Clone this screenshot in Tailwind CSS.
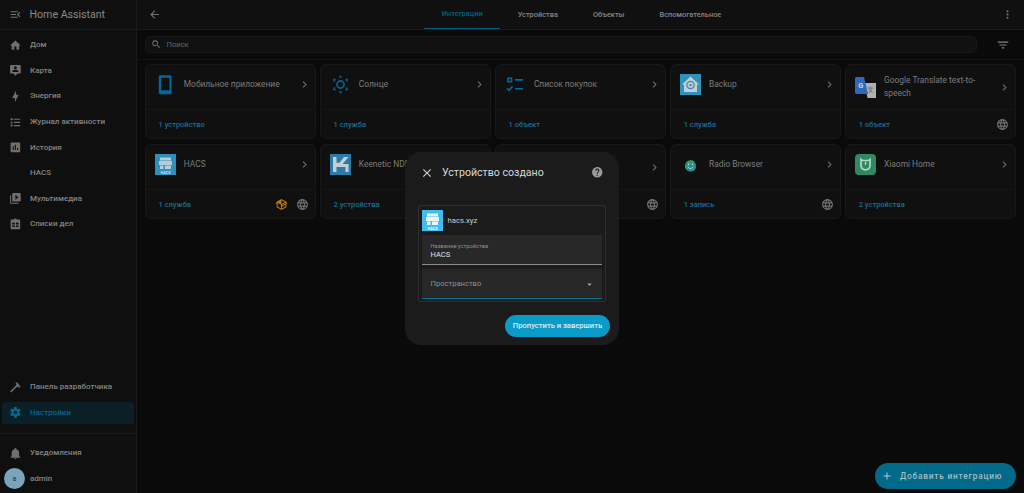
<!doctype html>
<html lang="ru">
<head>
<meta charset="utf-8">
<script src="https://cdn.jsdelivr.net/npm/@tailwindcss/browser@4"></script>
<title>Home Assistant</title>
</head>
<body class="bg-[#0a0a0a]">
<div class="relative flex h-[493px] w-[1024px] overflow-hidden bg-[#0a0a0a] font-['Roboto',sans-serif] text-[#858585]">

  <!-- sidebar -->
  <aside class="flex w-[137px] shrink-0 flex-col border-r border-[#1a1a1a] bg-[#0f0f0f]">
    <div class="flex h-[30px] shrink-0 items-center gap-[7.5px] border-b border-[#1a1a1a] pl-[9px]">
      <svg class="size-[13px] fill-[#767676]" viewBox="0 0 24 24"><path d="M21,15.61L19.59,17L14.58,12L19.59,7L21,8.39L17.44,12L21,15.61M3,6H16V8H3V6M3,13V11H13V13H3M3,18V16H16V18H3Z"/></svg>
      <span class="text-[10.6px] text-[#8a8a8a]">Home Assistant</span>
    </div>
    <nav class="flex flex-1 flex-col pt-[2.4px] text-[8px] font-medium">
      <a class="flex h-[25.6px] items-center gap-[8.2px] pl-[9px]"><svg class="size-[12.8px] shrink-0 fill-[#6f6f6f]" viewBox="0 0 24 24"><path d="M10,20V14H14V20H19V12H22L12,3L2,12H5V20H10Z"/></svg>Дом</a>
      <a class="flex h-[25.6px] items-center gap-[8.2px] pl-[9px]"><svg class="size-[12.8px] shrink-0 fill-[#6f6f6f]" viewBox="0 0 24 24"><path d="M20 2H4C2.9 2 2 2.9 2 4V16C2 17.1 2.9 18 4 18H8L12 22L16 18H20C21.1 18 22 17.1 22 16V4C22 2.9 21.1 2 20 2M12 4.3C13.5 4.3 14.7 5.5 14.7 7S13.5 9.7 12 9.7 9.3 8.5 9.3 7 10.5 4.3 12 4.3M18 15H6V14.1C6 12.1 10 11 12 11S18 12.1 18 14.1V15Z"/></svg>Карта</a>
      <a class="flex h-[25.6px] items-center gap-[8.2px] pl-[9px]"><svg class="size-[12.8px] shrink-0 fill-[#6f6f6f]" viewBox="0 0 24 24"><path d="M11 15H6L13 1V9H18L11 23V15Z"/></svg>Энергия</a>
      <a class="flex h-[25.6px] items-center gap-[8.2px] pl-[9px]"><svg class="size-[12.8px] shrink-0 fill-[#6f6f6f]" viewBox="0 0 24 24"><path d="M5,9.5L7.5,14H2.5L5,9.5M3,4H7V8H3V4M5,20A2,2 0 0,0 7,18A2,2 0 0,0 5,16A2,2 0 0,0 3,18A2,2 0 0,0 5,20M9,5V7H21V5H9M9,19H21V17H9V19M9,13H21V11H9V13Z"/></svg>Журнал активности</a>
      <a class="flex h-[25.6px] items-center gap-[8.2px] pl-[9px]"><svg class="size-[12.8px] shrink-0 fill-[#6f6f6f]" viewBox="0 0 24 24"><path d="M19 3H5C3.9 3 3 3.9 3 5V19C3 20.1 3.9 21 5 21H19C20.1 21 21 20.1 21 19V5C21 3.9 20.1 3 19 3M9 17H7V10H9V17M13 17H11V7H13V17M17 17H15V13H17V17Z"/></svg>История</a>
      <a class="flex h-[25.6px] items-center gap-[8.2px] pl-[9px]"><span class="size-[12.8px] shrink-0"></span>HACS</a>
      <a class="flex h-[25.6px] items-center gap-[8.2px] pl-[9px]"><svg class="size-[12.8px] shrink-0 fill-[#6f6f6f]" viewBox="0 0 24 24"><path d="M4,6H2V20A2,2 0 0,0 4,22H18V20H4V6M20,2H8A2,2 0 0,0 6,4V16A2,2 0 0,0 8,18H20A2,2 0 0,0 22,16V4A2,2 0 0,0 20,2M12,14.5V5.5L18,10L12,14.5Z"/></svg>Мультимедиа</a>
      <a class="flex h-[25.6px] items-center gap-[8.2px] pl-[9px]"><svg class="size-[12.8px] shrink-0 fill-[#6f6f6f]" viewBox="0 0 24 24"><path fill-rule="evenodd" d="M19 3H14.82C14.4 1.84 13.3 1 12 1S9.6 1.84 9.18 3H5C3.9 3 3 3.9 3 5V19C3 20.1 3.9 21 5 21H19C20.1 21 21 20.1 21 19V5C21 3.9 20.1 3 19 3ZM6 9V12H11V9ZM13 9V12H18V9ZM6 14V17H11V14ZM13 14V17H18V14Z"/></svg>Списки дел</a>

      <div class="flex-1"></div>

      <a class="flex h-[25.6px] items-center gap-[8.2px] pl-[9px]"><svg class="size-[12.8px] shrink-0 fill-[#6f6f6f]" viewBox="0 0 24 24"><path d="M2 19.63L13.43 8.2L12.72 7.5L14.14 6.07L12 3.89C13.2 2.7 15.09 2.7 16.27 3.89L19.87 7.5L18.45 8.91H21.29L22 9.62L18.45 13.21L17.74 12.5V9.62L16.27 11.04L15.56 10.33L4.13 21.76L2 19.63Z"/></svg>Панель разработчика</a>
      <a class="relative flex h-[25.6px] items-center gap-[8.2px] pl-[9px] text-[#036a8e]"><span class="absolute left-[2px] top-[1.8px] h-[22px] w-[132px] rounded-[3px] bg-[#0b1f27]"></span><svg class="relative size-[12.8px] shrink-0 fill-[#036a8e]" viewBox="0 0 24 24"><path d="M12,15.5A3.5,3.5 0 0,1 8.5,12A3.5,3.5 0 0,1 12,8.5A3.5,3.5 0 0,1 15.5,12A3.5,3.5 0 0,1 12,15.5M19.43,12.97C19.47,12.65 19.5,12.33 19.5,12C19.5,11.67 19.47,11.34 19.43,11L21.54,9.37C21.73,9.22 21.78,8.95 21.66,8.73L19.66,5.27C19.54,5.05 19.27,4.96 19.05,5.05L16.56,6.05C16.04,5.66 15.5,5.32 14.87,5.07L14.5,2.42C14.46,2.18 14.25,2 14,2H10C9.75,2 9.54,2.18 9.5,2.42L9.13,5.07C8.5,5.32 7.96,5.66 7.44,6.05L4.95,5.05C4.73,4.96 4.46,5.05 4.34,5.27L2.34,8.73C2.21,8.95 2.27,9.22 2.46,9.37L4.57,11C4.53,11.34 4.5,11.67 4.5,12C4.5,12.33 4.53,12.65 4.57,12.97L2.46,14.63C2.27,14.78 2.21,15.05 2.34,15.27L4.34,18.73C4.46,18.95 4.73,19.03 4.95,18.95L7.44,17.94C7.96,18.34 8.5,18.68 9.13,18.93L9.5,21.58C9.54,21.82 9.75,22 10,22H14C14.25,22 14.46,21.82 14.5,21.58L14.87,18.93C15.5,18.67 16.04,18.34 16.56,17.94L19.05,18.95C19.27,19.03 19.54,18.95 19.66,18.73L21.66,15.27C21.78,15.05 21.73,14.78 21.54,14.63L19.43,12.97Z"/></svg><span class="relative">Настройки</span></a>
      <div class="my-[7px] border-t border-[#1a1a1a]"></div>
      <a class="flex h-[25.6px] items-center gap-[8.2px] pl-[9px]"><svg class="size-[12.8px] shrink-0 fill-[#6f6f6f]" viewBox="0 0 24 24"><path d="M21,19V20H3V19L5,17V11C5,7.9 7.03,5.17 10,4.29C10,4.19 10,4.1 10,4A2,2 0 0,1 12,2A2,2 0 0,1 14,4C14,4.1 14,4.19 14,4.29C16.97,5.17 19,7.9 19,11V17L21,19M14,21A2,2 0 0,1 12,23A2,2 0 0,1 10,21"/></svg>Уведомления</a>
      <a class="mb-[1.3px] flex h-[25.6px] items-center gap-[5px] pl-[4px]"><span class="flex size-[21px] shrink-0 items-center justify-center rounded-full bg-[#7ba3bc] text-[7px] text-[#33454f]">a</span>admin</a>
    </nav>
  </aside>

  <!-- main -->
  <main class="flex min-w-0 flex-1 flex-col">
    <header class="flex h-[30px] shrink-0 items-center border-b border-[#1a1a1a] bg-[#101010] px-[11px]">
      <div class="flex flex-1">
        <svg class="size-[13px] fill-[#727272]" viewBox="0 0 24 24"><path d="M20,11V13H8L13.5,18.5L12.08,19.92L4.16,12L12.08,4.08L13.5,5.5L8,11H20Z"/></svg>
      </div>
      <div class="ml-[2px] flex h-full text-[7.4px] font-medium">
        <a class="flex items-center border-b-[1.5px] border-[#02617f] px-[17.5px] text-[#02617f]">Интеграции</a>
        <a class="flex items-center px-[17.5px]">Устройства</a>
        <a class="flex items-center px-[17.5px]">Объекты</a>
        <a class="flex items-center px-[17.5px]">Вспомогательное</a>
      </div>
      <div class="flex flex-1 justify-end">
        <svg class="mr-[-1px] size-[13px] fill-[#727272]" viewBox="0 0 24 24"><path d="M12,16A2,2 0 0,1 14,18A2,2 0 0,1 12,20A2,2 0 0,1 10,18A2,2 0 0,1 12,16M12,10A2,2 0 0,1 14,12A2,2 0 0,1 12,14A2,2 0 0,1 10,12A2,2 0 0,1 12,10M12,4A2,2 0 0,1 14,6A2,2 0 0,1 12,8A2,2 0 0,1 10,6A2,2 0 0,1 12,4Z"/></svg>
      </div>
    </header>

    <div class="flex h-[30px] shrink-0 items-center gap-[19px] border-b border-[#121212] pl-[8px] pr-[14px]">
      <div class="flex h-[17px] flex-1 items-center gap-[5px] rounded-[5px] border border-[#181818] bg-[#111111] pl-[5px] text-[7.6px] text-[#666666]">
        <svg class="size-[10.5px] fill-[#777777]" viewBox="0 0 24 24"><path d="M9.5,3A6.5,6.5 0 0,1 16,9.5C16,11.11 15.41,12.59 14.44,13.73L14.71,14H15.5L20.5,19L19,20.5L14,15.5V14.71L13.73,14.44C12.59,15.41 11.11,16 9.5,16A6.5,6.5 0 0,1 3,9.5A6.5,6.5 0 0,1 9.5,3M9.5,5C7,5 5,7 5,9.5C5,12 7,14 9.5,14C12,14 14,12 14,9.5C14,7 12,5 9.5,5Z"/></svg>
        Поиск
      </div>
      <svg class="size-[14px] fill-[#848484]" viewBox="0 0 24 24"><path d="M6,13H18V11H6M3,6V8H21V6M10,18H14V16H10V18Z"/></svg>
    </div>

    <section class="grid grid-cols-5 gap-x-[4.3px] gap-y-[5px] pl-[8px] pr-[8px] pt-[4.3px]">

      <!-- card 1 -->
      <article class="flex h-[75px] flex-col rounded-[6px] border border-[#181818] bg-[#101010]">
        <div class="flex h-[45px] shrink-0 items-center gap-[8.3px] border-b border-[#161616] pb-[5px] pl-[8.5px] pr-[3.7px]">
          <svg class="size-[21px] shrink-0" viewBox="0 0 21 21"><path fill="#02679a" fill-rule="evenodd" d="M5.3 1.3H15C15.9 1.3 16.5 1.9 16.5 2.8V18.8C16.5 19.7 15.9 20.3 15 20.3H5.3C4.4 20.3 3.8 19.7 3.8 18.8V2.8C3.8 1.9 4.4 1.3 5.3 1.3ZM6.2 3.7V16.3H14.5V3.7Z"/></svg>
          <span class="flex-1 text-[8.4px] text-[#7c7c7c]">Мобильное приложение</span>
          <svg class="size-[13px] fill-[#6d6d6d]" viewBox="0 0 24 24"><path d="M8.59,16.58L13.17,12L8.59,7.41L10,6L16,12L10,18L8.59,16.58Z"/></svg>
        </div>
        <div class="flex flex-1 items-center px-[12.5px] text-[7.5px] font-medium text-[#1b6d8f]">1 устройство</div>
      </article>

      <!-- card 2 -->
      <article class="flex h-[75px] flex-col rounded-[6px] border border-[#181818] bg-[#101010]">
        <div class="flex h-[45px] shrink-0 items-center gap-[8.3px] border-b border-[#161616] pb-[5px] pl-[8.5px] pr-[3.7px]">
          <svg class="size-[21px] shrink-0" viewBox="0 0 21 21"><circle cx="10.5" cy="10.5" r="3.6" fill="none" stroke="#02679a" stroke-width="1.6"/><path fill="#02679a" d="M10.5 1.2L12.4 3.6H8.6ZM10.5 19.8L12.4 17.4H8.6ZM3.2 4.8H5.8V7.4H3.2ZM15.2 4.8H17.8V7.4H15.2ZM3.2 13.6H5.8V16.2H3.2ZM15.2 13.6H17.8V16.2H15.2Z"/><path fill="#101010" d="M4.8 5.8h1v1.6h-1zM15.2 5.8h1v1.6h-1zM4.8 13.6h1v1.6h-1zM15.2 13.6h1v1.6h-1z"/></svg>
          <span class="flex-1 text-[8.4px] text-[#7c7c7c]">Солнце</span>
          <svg class="size-[13px] fill-[#6d6d6d]" viewBox="0 0 24 24"><path d="M8.59,16.58L13.17,12L8.59,7.41L10,6L16,12L10,18L8.59,16.58Z"/></svg>
        </div>
        <div class="flex flex-1 items-center px-[12.5px] text-[7.5px] font-medium text-[#1b6d8f]">1 служба</div>
      </article>

      <!-- card 3 -->
      <article class="flex h-[75px] flex-col rounded-[6px] border border-[#181818] bg-[#101010]">
        <div class="flex h-[45px] shrink-0 items-center gap-[8.3px] border-b border-[#161616] pb-[5px] pl-[8.5px] pr-[3.7px]">
          <svg class="size-[21px] shrink-0" viewBox="0 0 21 21"><path fill="none" stroke="#02679a" stroke-width="1.6" d="M2.9 4.2h3.6v3.6H2.9ZM10 5.9H18M10 14.8H18M2 14.4l2 2 3.6-4"/></svg>
          <span class="flex-1 text-[8.4px] text-[#7c7c7c]">Список покупок</span>
          <svg class="size-[13px] fill-[#6d6d6d]" viewBox="0 0 24 24"><path d="M8.59,16.58L13.17,12L8.59,7.41L10,6L16,12L10,18L8.59,16.58Z"/></svg>
        </div>
        <div class="flex flex-1 items-center px-[12.5px] text-[7.5px] font-medium text-[#1b6d8f]">1 объект</div>
      </article>

      <!-- card 4 -->
      <article class="flex h-[75px] flex-col rounded-[6px] border border-[#181818] bg-[#101010]">
        <div class="flex h-[45px] shrink-0 items-center gap-[8.3px] border-b border-[#161616] pb-[5px] pl-[8.5px] pr-[3.7px]">
          <svg class="size-[21px] shrink-0" viewBox="0 0 21 21"><rect width="21" height="21" fill="#3091bd"/><path fill="#c4cdd1" d="M10.5 2.4L19 10.4H17V18H4V10.4H2Z"/><circle cx="10.5" cy="11" r="3.6" fill="none" stroke="#3091bd" stroke-width="1.3"/><circle cx="10.5" cy="11" r="1.2" fill="#3091bd"/></svg>
          <span class="flex-1 text-[8.4px] text-[#7c7c7c]">Backup</span>
          <svg class="size-[13px] fill-[#6d6d6d]" viewBox="0 0 24 24"><path d="M8.59,16.58L13.17,12L8.59,7.41L10,6L16,12L10,18L8.59,16.58Z"/></svg>
        </div>
        <div class="flex flex-1 items-center px-[12.5px] text-[7.5px] font-medium text-[#1b6d8f]">1 служба</div>
      </article>

      <!-- card 5 -->
      <article class="flex h-[75px] flex-col rounded-[6px] border border-[#181818] bg-[#101010]">
        <div class="flex h-[45px] shrink-0 items-center gap-[8.3px] border-b border-[#161616] pl-[8.5px] pr-[3.7px]">
          <div class="relative h-[21px] w-[21px] shrink-0">
            <svg class="absolute inset-0 size-[21px]" viewBox="0 0 21 21"><path fill="#b0b0b0" d="M9.5 6H21V21H12.5Z"/><path fill="#3268b8" d="M0 1.5C0 .7 .7 0 1.5 0H9L13 17H1.5C.7 17 0 16.3 0 15.5Z"/></svg>
            <span class="absolute left-[3.5px] top-[4px] text-[7.5px] font-bold leading-[9px] text-[#c7d3e8]">G</span>
            <span class="absolute left-[12.5px] top-[9px] text-[6.5px] leading-[8px] text-[#5a5a5a]">文</span>
          </div>
          <span class="flex-1 text-[8.4px] leading-[13.4px] text-[#7c7c7c]">Google Translate text-to-speech</span>
          <svg class="size-[13px] shrink-0 fill-[#6d6d6d]" viewBox="0 0 24 24"><path d="M8.59,16.58L13.17,12L8.59,7.41L10,6L16,12L10,18L8.59,16.58Z"/></svg>
        </div>
        <div class="flex flex-1 items-center justify-between pl-[12.5px] pr-[5.5px] text-[7.5px] font-medium text-[#1b6d8f]">1 объект
          <svg class="size-[13px] fill-[#727272]" viewBox="0 0 24 24"><path d="M16.36,14C16.44,13.34 16.5,12.68 16.5,12C16.5,11.32 16.44,10.66 16.36,10H19.74C19.9,10.64 20,11.31 20,12C20,12.69 19.9,13.36 19.74,14M14.59,19.56C15.19,18.45 15.65,17.25 15.97,16H18.92C17.96,17.65 16.43,18.93 14.59,19.56M14.34,14H9.66C9.56,13.34 9.5,12.68 9.5,12C9.5,11.32 9.56,10.65 9.66,10H14.34C14.43,10.65 14.5,11.32 14.5,12C14.5,12.68 14.43,13.34 14.34,14M12,19.96C11.17,18.76 10.5,17.43 10.09,16H13.91C13.5,17.43 12.83,18.76 12,19.96M8,8H5.08C6.03,6.34 7.57,5.06 9.4,4.44C8.8,5.55 8.35,6.75 8,8M5.08,16H8C8.35,17.25 8.8,18.45 9.4,19.56C7.57,18.93 6.03,17.65 5.08,16M4.26,14C4.1,13.36 4,12.69 4,12C4,11.31 4.1,10.64 4.26,10H7.64C7.56,10.66 7.5,11.32 7.5,12C7.5,12.68 7.56,13.34 7.64,14M12,4.03C12.83,5.23 13.5,6.57 13.91,8H10.09C10.5,6.57 11.17,5.23 12,4.03M18.92,8H15.97C15.65,6.75 15.19,5.55 14.59,4.44C16.43,5.07 17.96,6.34 18.92,8M12,2C6.47,2 2,6.5 2,12A10,10 0 0,0 12,22A10,10 0 0,0 22,12A10,10 0 0,0 12,2Z"/></svg>
        </div>
      </article>

      <!-- card 6 HACS -->
      <article class="flex h-[75px] flex-col rounded-[6px] border border-[#181818] bg-[#101010]">
        <div class="flex h-[45px] shrink-0 items-center gap-[8.3px] border-b border-[#161616] pb-[5px] pl-[8.5px] pr-[3.7px]">
          <svg class="size-[21px] shrink-0" viewBox="0 0 21 21"><rect width="21" height="21" fill="#2f8fbb"/><path fill="#b8cad3" d="M5 3.5H16V6.5H5ZM4 7H17V11H4ZM5 11.5H8.5V15H5ZM10 11.5H16V15H10Z"/><text x="10.5" y="19.5" text-anchor="middle" font-size="3.8" font-weight="700" fill="#d2dde2" font-family="Roboto">HACS</text></svg>
          <span class="flex-1 text-[8.4px] text-[#7c7c7c]">HACS</span>
          <svg class="size-[13px] fill-[#6d6d6d]" viewBox="0 0 24 24"><path d="M8.59,16.58L13.17,12L8.59,7.41L10,6L16,12L10,18L8.59,16.58Z"/></svg>
        </div>
        <div class="flex flex-1 items-center gap-[8px] pl-[12.5px] pr-[5.5px] text-[7.5px] font-medium text-[#1b6d8f]"><span class="flex-1">1 служба</span>
          <svg class="size-[13px] fill-[#b8770a]" viewBox="0 0 24 24"><path d="M2,10.96C1.5,10.68 1.35,10.07 1.63,9.59L3.13,7C3.24,6.8 3.41,6.66 3.6,6.58L11.43,2.18C11.59,2.06 11.79,2 12,2C12.21,2 12.41,2.06 12.57,2.18L20.47,6.62C20.66,6.72 20.82,6.88 20.91,7.08L22.36,9.6C22.64,10.08 22.47,10.69 22,10.96L21,11.54V16.5C21,16.88 20.79,17.21 20.47,17.38L12.57,21.82C12.41,21.94 12.21,22 12,22C11.79,22 11.59,21.94 11.43,21.82L3.53,17.38C3.21,17.21 3,16.88 3,16.5V10.96C2.7,11.13 2.32,11.14 2,10.96M12,4.15V4.15L12,10.85V10.85L17.96,7.5L12,4.15M5,15.91L11,19.29V12.58L5,9.21V15.91M19,15.91V12.69L14,15.59C13.67,15.77 13.3,15.76 13,15.6V19.29L19,15.91M13.85,13.36L20.13,9.73L19.55,8.72L13.27,12.35L13.85,13.36Z"/></svg>
          <svg class="size-[13px] fill-[#727272]" viewBox="0 0 24 24"><path d="M16.36,14C16.44,13.34 16.5,12.68 16.5,12C16.5,11.32 16.44,10.66 16.36,10H19.74C19.9,10.64 20,11.31 20,12C20,12.69 19.9,13.36 19.74,14M14.59,19.56C15.19,18.45 15.65,17.25 15.97,16H18.92C17.96,17.65 16.43,18.93 14.59,19.56M14.34,14H9.66C9.56,13.34 9.5,12.68 9.5,12C9.5,11.32 9.56,10.65 9.66,10H14.34C14.43,10.65 14.5,11.32 14.5,12C14.5,12.68 14.43,13.34 14.34,14M12,19.96C11.17,18.76 10.5,17.43 10.09,16H13.91C13.5,17.43 12.83,18.76 12,19.96M8,8H5.08C6.03,6.34 7.57,5.06 9.4,4.44C8.8,5.55 8.35,6.75 8,8M5.08,16H8C8.35,17.25 8.8,18.45 9.4,19.56C7.57,18.93 6.03,17.65 5.08,16M4.26,14C4.1,13.36 4,12.69 4,12C4,11.31 4.1,10.64 4.26,10H7.64C7.56,10.66 7.5,11.32 7.5,12C7.5,12.68 7.56,13.34 7.64,14M12,4.03C12.83,5.23 13.5,6.57 13.91,8H10.09C10.5,6.57 11.17,5.23 12,4.03M18.92,8H15.97C15.65,6.75 15.19,5.55 14.59,4.44C16.43,5.07 17.96,6.34 18.92,8M12,2C6.47,2 2,6.5 2,12A10,10 0 0,0 12,22A10,10 0 0,0 22,12A10,10 0 0,0 12,2Z"/></svg>
        </div>
      </article>

      <!-- card 7 Keenetic -->
      <article class="flex h-[75px] flex-col rounded-[6px] border border-[#181818] bg-[#101010]">
        <div class="flex h-[45px] shrink-0 items-center gap-[8.3px] border-b border-[#161616] pb-[5px] pl-[8.5px] pr-[3.7px]">
          <svg class="size-[21px] shrink-0" viewBox="0 0 21 21"><rect width="21" height="21" fill="#2b7ba6"/><path fill="#c4cfd4" d="M3 3H6.5V8.8H9.5L14 3H18.5L12.6 10H18.5V18H15.5V13H6.5V18H3Z"/></svg>
          <span class="flex-1 whitespace-nowrap text-[8.4px] text-[#7c7c7c]">Keenetic NDMS2 Router</span>
        </div>
        <div class="flex flex-1 items-center px-[12.5px] text-[7.5px] font-medium text-[#1b6d8f]">2 устройства</div>
      </article>

      <!-- card 8 (behind dialog) -->
      <article class="flex h-[75px] flex-col rounded-[6px] border border-[#181818] bg-[#101010]">
        <div class="flex h-[45px] shrink-0 items-center justify-end border-b border-[#161616] pl-[8.5px] pr-[3.7px]">
          <svg class="size-[13px] fill-[#6d6d6d]" viewBox="0 0 24 24"><path d="M8.59,16.58L13.17,12L8.59,7.41L10,6L16,12L10,18L8.59,16.58Z"/></svg>
        </div>
        <div class="flex flex-1 items-center justify-end pr-[5.5px]">
          <svg class="size-[13px] fill-[#727272]" viewBox="0 0 24 24"><path d="M16.36,14C16.44,13.34 16.5,12.68 16.5,12C16.5,11.32 16.44,10.66 16.36,10H19.74C19.9,10.64 20,11.31 20,12C20,12.69 19.9,13.36 19.74,14M14.59,19.56C15.19,18.45 15.65,17.25 15.97,16H18.92C17.96,17.65 16.43,18.93 14.59,19.56M14.34,14H9.66C9.56,13.34 9.5,12.68 9.5,12C9.5,11.32 9.56,10.65 9.66,10H14.34C14.43,10.65 14.5,11.32 14.5,12C14.5,12.68 14.43,13.34 14.34,14M12,19.96C11.17,18.76 10.5,17.43 10.09,16H13.91C13.5,17.43 12.83,18.76 12,19.96M8,8H5.08C6.03,6.34 7.57,5.06 9.4,4.44C8.8,5.55 8.35,6.75 8,8M5.08,16H8C8.35,17.25 8.8,18.45 9.4,19.56C7.57,18.93 6.03,17.65 5.08,16M4.26,14C4.1,13.36 4,12.69 4,12C4,11.31 4.1,10.64 4.26,10H7.64C7.56,10.66 7.5,11.32 7.5,12C7.5,12.68 7.56,13.34 7.64,14M12,4.03C12.83,5.23 13.5,6.57 13.91,8H10.09C10.5,6.57 11.17,5.23 12,4.03M18.92,8H15.97C15.65,6.75 15.19,5.55 14.59,4.44C16.43,5.07 17.96,6.34 18.92,8M12,2C6.47,2 2,6.5 2,12A10,10 0 0,0 12,22A10,10 0 0,0 22,12A10,10 0 0,0 12,2Z"/></svg>
        </div>
      </article>

      <!-- card 9 Radio Browser -->
      <article class="flex h-[75px] flex-col rounded-[6px] border border-[#181818] bg-[#101010]">
        <div class="flex h-[45px] shrink-0 items-center gap-[8.3px] border-b border-[#161616] pb-[5px] pl-[8.5px] pr-[3.7px]">
          <svg class="size-[21px] shrink-0" viewBox="0 0 21 21"><circle cx="10.5" cy="12" r="5.6" fill="#1f8a9e"/><path fill="#3b9c55" d="M6 8.5C8 6 12 5.5 14.5 7.5L12 9.5L8.5 9ZM5.2 12C6.5 11.5 7.5 13 7.5 15L6.5 15.5C5.6 14.5 5.2 13.3 5.2 12ZM12 15.5L15.8 12.5C15.8 14.6 14.5 16.6 12.4 17.3Z"/><path fill="none" stroke="#c9d6d4" stroke-width="1" d="M7.8 12.6c1.4 2.6 4 2.6 5.4 0"/><circle cx="8.5" cy="10.4" r=".8" fill="#c9d6d4"/><circle cx="12.5" cy="10.4" r=".8" fill="#c9d6d4"/></svg>
          <span class="flex-1 text-[8.4px] text-[#7c7c7c]">Radio Browser</span>
          <svg class="size-[13px] fill-[#6d6d6d]" viewBox="0 0 24 24"><path d="M8.59,16.58L13.17,12L8.59,7.41L10,6L16,12L10,18L8.59,16.58Z"/></svg>
        </div>
        <div class="flex flex-1 items-center justify-between pl-[12.5px] pr-[5.5px] text-[7.5px] font-medium text-[#1b6d8f]">1 запись
          <svg class="size-[13px] fill-[#727272]" viewBox="0 0 24 24"><path d="M16.36,14C16.44,13.34 16.5,12.68 16.5,12C16.5,11.32 16.44,10.66 16.36,10H19.74C19.9,10.64 20,11.31 20,12C20,12.69 19.9,13.36 19.74,14M14.59,19.56C15.19,18.45 15.65,17.25 15.97,16H18.92C17.96,17.65 16.43,18.93 14.59,19.56M14.34,14H9.66C9.56,13.34 9.5,12.68 9.5,12C9.5,11.32 9.56,10.65 9.66,10H14.34C14.43,10.65 14.5,11.32 14.5,12C14.5,12.68 14.43,13.34 14.34,14M12,19.96C11.17,18.76 10.5,17.43 10.09,16H13.91C13.5,17.43 12.83,18.76 12,19.96M8,8H5.08C6.03,6.34 7.57,5.06 9.4,4.44C8.8,5.55 8.35,6.75 8,8M5.08,16H8C8.35,17.25 8.8,18.45 9.4,19.56C7.57,18.93 6.03,17.65 5.08,16M4.26,14C4.1,13.36 4,12.69 4,12C4,11.31 4.1,10.64 4.26,10H7.64C7.56,10.66 7.5,11.32 7.5,12C7.5,12.68 7.56,13.34 7.64,14M12,4.03C12.83,5.23 13.5,6.57 13.91,8H10.09C10.5,6.57 11.17,5.23 12,4.03M18.92,8H15.97C15.65,6.75 15.19,5.55 14.59,4.44C16.43,5.07 17.96,6.34 18.92,8M12,2C6.47,2 2,6.5 2,12A10,10 0 0,0 12,22A10,10 0 0,0 22,12A10,10 0 0,0 12,2Z"/></svg>
        </div>
      </article>

      <!-- card 10 Xiaomi -->
      <article class="flex h-[75px] flex-col rounded-[6px] border border-[#181818] bg-[#101010]">
        <div class="flex h-[45px] shrink-0 items-center gap-[8.3px] border-b border-[#161616] pb-[5px] pl-[8.5px] pr-[3.7px]">
          <svg class="size-[21px] shrink-0" viewBox="0 0 21 21"><rect width="21" height="21" rx="4" fill="#2f8a63"/><path fill="none" stroke="#b9d3c6" stroke-width="1.7" d="M6 5.5C7.5 7 13.5 7 15 5.5V11.5C15 14 13 15.8 10.5 15.8S6 14 6 11.5Z"/><path stroke="#b9d3c6" stroke-width="1.3" d="M10.5 8V11"/></svg>
          <span class="flex-1 text-[8.4px] text-[#7c7c7c]">Xiaomi Home</span>
          <svg class="size-[13px] fill-[#6d6d6d]" viewBox="0 0 24 24"><path d="M8.59,16.58L13.17,12L8.59,7.41L10,6L16,12L10,18L8.59,16.58Z"/></svg>
        </div>
        <div class="flex flex-1 items-center px-[12.5px] text-[7.5px] font-medium text-[#1b6d8f]">2 устройства</div>
      </article>
    </section>
  </main>

  <!-- FAB -->
  <button class="absolute left-[875px] top-[463px] flex h-[26px] w-[141px] items-center gap-[7px] whitespace-nowrap rounded-full bg-[#016a89] pl-[6px] text-[8.3px] font-medium tracking-[0.8px] text-[#a3bcc6]">
    <svg class="size-[12px] fill-[#b2c8d0]" viewBox="0 0 24 24"><path d="M19,13H13V19H11V13H5V11H11V5H13V11H19V13Z"/></svg>
    Добавить интеграцию
  </button>

  <!-- dialog -->
  <div class="absolute left-[405px] top-[152px] flex h-[193px] w-[214px] flex-col rounded-[16px] bg-[#1b1b1b] px-[13px]">
    <div class="flex h-[41px] shrink-0 items-center pl-[1.5px] pr-[2.75px]">
      <svg class="size-[14px] shrink-0 fill-[#d0d0d0]" viewBox="0 0 24 24"><path d="M19,6.41L17.59,5L12,10.59L6.41,5L5,6.41L10.59,12L5,17.59L6.41,19L12,13.41L17.59,19L19,17.59L13.41,12L19,6.41Z"/></svg>
      <h2 class="ml-[8.5px] flex-1 text-[10.6px] font-normal text-[#d8d8d8]">Устройство создано</h2>
      <svg class="size-[12.5px] shrink-0 fill-[#9a9a9a]" viewBox="0 0 24 24"><path d="M15.07,11.25L14.17,12.17C13.45,12.89 13,13.5 13,15H11V14.5C11,13.39 11.45,12.39 12.17,11.67L13.41,10.41C13.78,10.05 14,9.55 14,9C14,7.89 13.1,7 12,7A2,2 0 0,0 10,9H8A4,4 0 0,1 12,5A4,4 0 0,1 16,9C16,9.88 15.64,10.67 15.07,11.25M13,19H11V17H13M12,2A10,10 0 0,0 2,12A10,10 0 0,0 12,22A10,10 0 0,0 22,12C22,6.47 17.5,2 12,2Z"/></svg>
    </div>
    <div class="mt-[12px] flex h-[97px] w-[188px] flex-col rounded-[2px] border border-[#2e2e2e] px-[3px] pt-[3px]">
      <div class="flex h-[22px] shrink-0 items-center gap-[4.5px] text-[7.7px] text-[#cccccc]">
        <svg class="size-[21px] shrink-0" viewBox="0 0 21 21"><rect width="21" height="21" fill="#40bcf0"/><path fill="#ecf6fb" d="M5 3.5H16V6.5H5ZM4 7H17V11H4ZM5 11.5H8.5V15H5ZM10 11.5H16V15H10Z"/><text x="10.5" y="19.5" text-anchor="middle" font-size="3.8" font-weight="700" fill="#ffffff" font-family="Roboto">HACS</text></svg>
        <span class="pt-[1px]">hacs.xyz</span>
      </div>
      <div class="mt-[4px] flex h-[30px] shrink-0 flex-col justify-center border-b border-[#8c8c8c] bg-[#282828] px-[8.5px] pt-[2px]">
        <span class="text-[5.7px] leading-[8px] text-[#8f8f8f]">Название устройства</span>
        <span class="text-[7.5px] leading-[9px] text-[#e0e0e0]">HACS</span>
      </div>
      <div class="mt-[4px] flex h-[30px] shrink-0 items-center justify-between border-b-[1.5px] border-[#026f93] bg-[#282828] pl-[8.5px] pr-[7px] pt-[1px] text-[7.6px] text-[#8f8f8f]">
        Пространство
        <svg class="size-[11px] fill-[#a0a0a0]" viewBox="0 0 24 24"><path d="M7,10L12,15L17,10H7Z"/></svg>
      </div>
    </div>
    <div class="mt-[13px] flex justify-end">
      <button class="-mr-[4px] flex h-[21.5px] w-[105px] items-center justify-center whitespace-nowrap rounded-full bg-[#0a9bc9] text-[7.6px] font-medium text-[#dbeef5]">Пропустить и завершить</button>
    </div>
  </div>
</div>
</body>
</html>
